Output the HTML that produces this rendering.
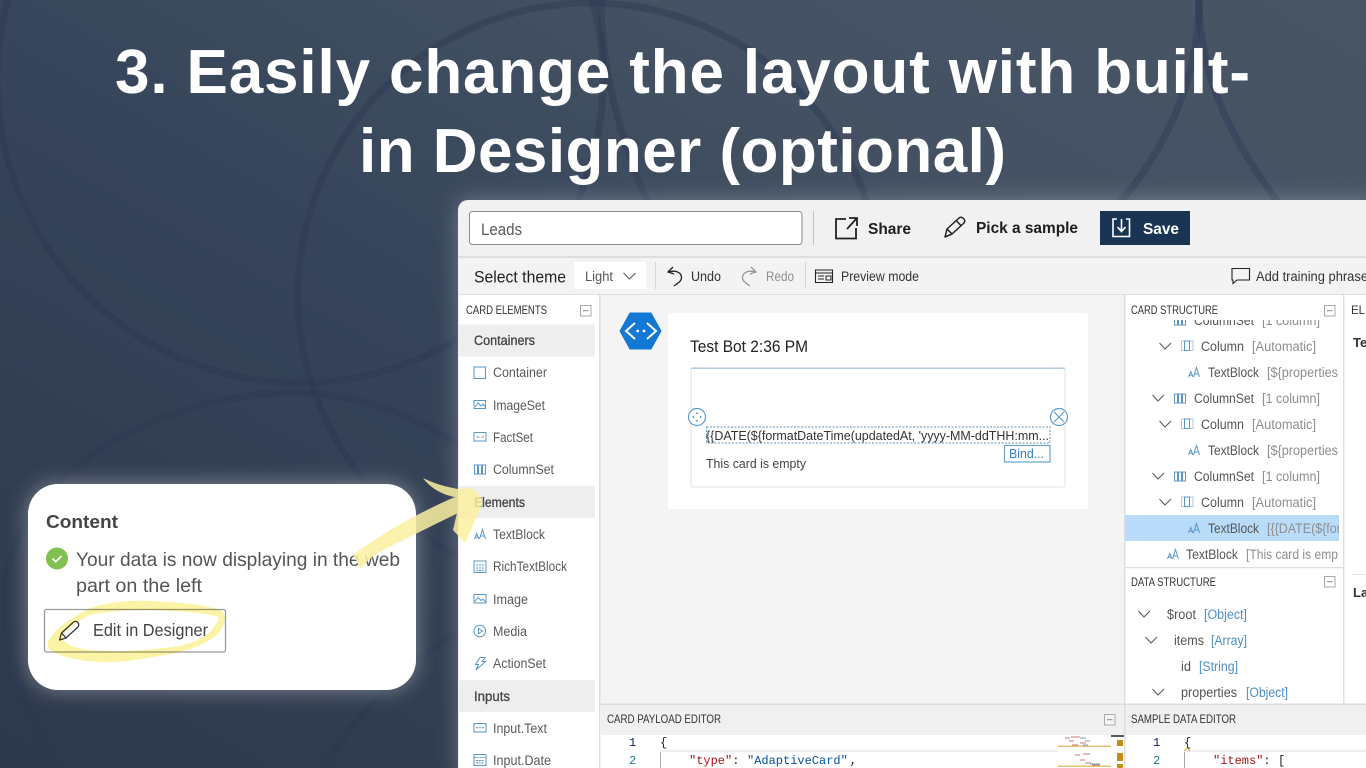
<!DOCTYPE html>
<html lang="en">
<head>
<meta charset="utf-8">
<title>Easily change the layout with built-in Designer</title>
<style>
html,body{margin:0;padding:0;width:1366px;height:768px;overflow:hidden;background:#36445a}
svg{display:block}
text{font-family:"Liberation Sans",sans-serif;white-space:pre}
.t{font-size:62px;font-weight:700;fill:#fff}
.h{font-size:11.500px;fill:#333}
.g{font-size:13.500px;fill:#444;stroke:#444;stroke-width:.3}
.i{font-size:13.500px;fill:#5a5a5a}
.a{font-size:13.500px;fill:#333}
.s{font-size:13.500px;fill:#555}
.m{font-size:13.500px;fill:#8e8e8e}
.b{font-size:13.500px;fill:#4d8fc4}
.c{font-family:"Liberation Mono",monospace;font-size:12px}
.ic{fill:none;stroke:#5a96c8;stroke-width:1}
.ch{fill:none;stroke:#555;stroke-width:1}
</style>
</head>
<body>
<svg width="1366" height="768" viewBox="0 0 1366 768" xmlns="http://www.w3.org/2000/svg">
<defs>
<linearGradient id="bg" x1="0" y1="1" x2="1" y2="0">
<stop offset="0" stop-color="#2d384a"/><stop offset=".45" stop-color="#36445a"/><stop offset=".75" stop-color="#445263"/><stop offset="1" stop-color="#485565"/>
</linearGradient>
<filter id="gl" x="-20%" y="-20%" width="140%" height="140%"><feGaussianBlur stdDeviation="11"/></filter>
<clipPath id="cs"><rect x="1125" y="320" width="214" height="247"/></clipPath>
<clipPath id="ds"><rect x="1125" y="568" width="214" height="136"/></clipPath>
</defs>

<!-- background -->
<rect width="1366" height="768" fill="url(#bg)"/>
<g fill="none" stroke="#2b3750" stroke-opacity=".42" stroke-width="7">
<circle cx="300" cy="80" r="303"/>
<circle cx="590" cy="295" r="292"/>
<path d="M1199,0C1199,80 1165,150 1118,205"/>
<path d="M1199,0C1199,80 1235,145 1280,205"/>
<path d="M601,0C601,100 640,190 675,265"/>
<path d="M296,392C150,395 5,480 5,600C5,660 30,720 57,768"/>
<path d="M296,392C360,394 420,418 460,446"/>
<path d="M462,630C410,660 350,720 323,768"/>
</g>

<!-- title -->
<text class="t" x="115" y="93" textLength="1135" lengthAdjust="spacing">3. Easily change the layout with built-</text>
<text class="t" x="359" y="172" textLength="647" lengthAdjust="spacing">in Designer (optional)</text>

<!-- glows -->
<rect x="458" y="200" width="920" height="580" rx="8" fill="#fff" opacity=".28" filter="url(#gl)"/>
<rect x="28" y="484" width="388" height="206" rx="30" fill="#fff" opacity=".38" filter="url(#gl)"/>

<!-- panel -->
<path d="M458,768V210a10,10 0 0 1 10,-10H1366V768Z" fill="#f1f1f1"/>
<rect x="458" y="256" width="908" height="2" fill="#dedede"/>
<rect x="458" y="293.500" width="908" height="2" fill="#dedede"/>

<!-- top bar -->
<rect x="469.500" y="211.500" width="332.500" height="33" rx="3" fill="#fff" stroke="#8c8c8c"/>
<text x="481" y="235" font-size="16.500" fill="#5a5a5a" textLength="41" lengthAdjust="spacingAndGlyphs">Leads</text>
<rect x="813" y="211" width="1" height="34" fill="#c4c4c4"/>
<path d="M846,219H836V238.500H856V228M847,229L856.500,218.500M849,218H857V226" fill="none" stroke="#222" stroke-width="1.800"/>
<text x="868" y="234" font-size="15.500" font-weight="700" fill="#1e1e1e" textLength="43" lengthAdjust="spacingAndGlyphs">Share</text>
<path d="M945,237L947,229L959,218C960.500,216.800 962,217 963.500,218.500C965,220 965.200,221.500 964,223L952,234ZM956,220.500L961.500,226M947,229L952,234" fill="none" stroke="#222" stroke-width="1.500" stroke-linejoin="round"/>
<text x="976" y="233" font-size="15.500" font-weight="700" fill="#1e1e1e" textLength="102" lengthAdjust="spacingAndGlyphs">Pick a sample</text>
<rect x="1100" y="211" width="90" height="34" fill="#1a3454"/>
<path d="M1117,219H1113V236.500H1129.500V219H1126M1121.500,219V231M1117.500,227L1121.500,231.500L1125.500,227" fill="none" stroke="#fff" stroke-width="1.600"/>
<text x="1143" y="234" font-size="15.500" font-weight="700" fill="#fff" textLength="36" lengthAdjust="spacingAndGlyphs">Save</text>

<!-- toolbar -->
<rect x="459" y="258" width="907" height="36" fill="#f3f3f3"/>
<text x="474" y="282.500" font-size="16.500" fill="#222" textLength="92" lengthAdjust="spacingAndGlyphs">Select theme</text>
<rect x="574" y="262" width="72" height="27" fill="#fff"/>
<text x="585" y="281" font-size="13.500" fill="#555" textLength="28" lengthAdjust="spacingAndGlyphs">Light</text>
<path d="M623.500,273L629.500,279L635.500,273" class="ch"/>
<rect x="655" y="262" width="1" height="27" fill="#d6d6d6"/>
<path d="M673,267L668,272L674,274M668.500,272C675,270 681,272 681.500,277C682,281 678,283 674,286" fill="none" stroke="#222" stroke-width="1.300"/>
<text x="691" y="281" class="a" textLength="30" lengthAdjust="spacingAndGlyphs">Undo</text>
<path d="M751,267L756,272L750,274M755.500,272C749,270 743,272 742.500,277C742,281 746,283 750,286" fill="none" stroke="#999" stroke-width="1.300"/>
<text x="766" y="281" font-size="13.500" fill="#8f8f8f" textLength="28" lengthAdjust="spacingAndGlyphs">Redo</text>
<rect x="805" y="262" width="1" height="27" fill="#d6d6d6"/>
<path d="M815.500,270H832.500V282.500H815.500ZM815.500,273H832.500M818,276H824M818,279H824" fill="none" stroke="#222" stroke-width="1.100"/>
<rect x="826" y="276" width="5" height="4" fill="none" stroke="#222"/>
<text x="841" y="281" class="a" textLength="78" lengthAdjust="spacingAndGlyphs">Preview mode</text>
<path d="M1232,268.500H1249.500V280H1237L1233,283.500V280H1232Z" fill="none" stroke="#222" stroke-width="1.100"/>
<text x="1256" y="281" class="a" textLength="112" lengthAdjust="spacingAndGlyphs">Add training phrase</text>

<!-- left panel -->
<rect x="459" y="295" width="141" height="473" fill="#fff"/>
<rect x="599" y="295" width="1.500" height="473" fill="#dedede"/>
<text x="466" y="314" class="h" textLength="81" lengthAdjust="spacingAndGlyphs">CARD ELEMENTS</text>
<rect x="580.500" y="305.500" width="10.500" height="10.500" fill="#fff" stroke="#aaa"/><path d="M583,310.700H588.500" stroke="#888"/>

<rect x="459" y="324.500" width="136" height="32" fill="#eee"/>
<text x="474" y="345" class="g" textLength="61" lengthAdjust="spacingAndGlyphs">Containers</text>
<rect x="474" y="367" width="11.500" height="11.500" class="ic"/>
<text x="493" y="377" class="i" textLength="54" lengthAdjust="spacingAndGlyphs">Container</text>
<g class="ic"><rect x="474" y="400.500" width="11.500" height="8"/><path d="M475,407L478,403L481,406L483,404L485.500,407"/></g>
<text x="493" y="410" class="i" textLength="52" lengthAdjust="spacingAndGlyphs">ImageSet</text>
<g class="ic"><rect x="474" y="432.500" width="12" height="8.500"/><path d="M476.500,437H479.500M481.500,437H484"/></g>
<text x="493" y="442" class="i" textLength="40" lengthAdjust="spacingAndGlyphs">FactSet</text>
<g class="ic"><rect x="474.500" y="465" width="3" height="9"/><rect x="478.500" y="465" width="3" height="9"/><rect x="482.500" y="465" width="3" height="9"/></g>
<text x="493" y="474" class="i" textLength="61" lengthAdjust="spacingAndGlyphs">ColumnSet</text>

<rect x="459" y="486" width="136" height="32" fill="#eee"/>
<text x="474" y="507" class="g" textLength="51" lengthAdjust="spacingAndGlyphs">Elements</text>
<g class="ic"><path d="M474.500,539L476.800,533.500L479,539M475.300,537.200H478.300M479.500,539L482.500,529.500L485.500,539M480.500,536H484.500"/></g>
<text x="493" y="539" class="i" textLength="52" lengthAdjust="spacingAndGlyphs">TextBlock</text>
<g class="ic"><rect x="474" y="561" width="12" height="11.500"/><path d="M476,565H484M476,568H484M476,570.500H484" stroke-dasharray="2 1"/></g>
<text x="493" y="571" class="i" textLength="74" lengthAdjust="spacingAndGlyphs">RichTextBlock</text>
<g class="ic"><rect x="474" y="594.500" width="12" height="8.500"/><path d="M475,601.500L478,597.500L481,600.500L483,599L485.500,602"/></g>
<text x="493" y="604" class="i" textLength="35" lengthAdjust="spacingAndGlyphs">Image</text>
<g class="ic"><circle cx="479.800" cy="631" r="5.800"/><path d="M478.500,628.500L482.500,631L478.500,633.500Z"/></g>
<text x="493" y="636" class="i" textLength="34" lengthAdjust="spacingAndGlyphs">Media</text>
<path class="ic" d="M480,657.500H485L482,661.500H485.500L476,670L478.500,664.500H475.500Z"/>
<text x="493" y="668" class="i" textLength="53" lengthAdjust="spacingAndGlyphs">ActionSet</text>

<rect x="459" y="680" width="136" height="32" fill="#eee"/>
<text x="474" y="701" class="g" textLength="36" lengthAdjust="spacingAndGlyphs">Inputs</text>
<g class="ic"><rect x="474" y="723.500" width="12" height="8.500"/><path d="M476,727.800H484" stroke-dasharray="2 1"/></g>
<text x="493" y="733" class="i" textLength="54" lengthAdjust="spacingAndGlyphs">Input.Text</text>
<g class="ic"><rect x="474" y="754.500" width="12" height="11"/><path d="M474,757.500H486M476,760.500H484M476,763H484" stroke-dasharray="2 .8"/></g>
<text x="493" y="765" class="i" textLength="58" lengthAdjust="spacingAndGlyphs">Input.Date</text>

<!-- canvas -->
<rect x="600.500" y="295" width="524" height="409" fill="#f4f4f4"/>
<path d="M620,331L630,313H651L661,331L651,349H630Z" fill="#1378d4" stroke="#1378d4" stroke-linejoin="round"/>
<path d="M635,323L626,331L635,339M647,323L656,331L647,339" fill="none" stroke="#fff" stroke-width="2"/>
<circle cx="637.700" cy="331" r="1.400" fill="#fff"/><circle cx="644" cy="331" r="1.400" fill="#fff"/>
<rect x="668" y="313" width="420" height="196" rx="2" fill="#fff"/>
<text x="690" y="352" font-size="16.500" fill="#222" textLength="118" lengthAdjust="spacingAndGlyphs">Test Bot 2:36 PM</text>
<rect x="691" y="368" width="374" height="119" rx="2" fill="#fff" stroke="#ececec" stroke-width="1.500"/>
<rect x="691" y="367.500" width="374" height="1.500" fill="#b5cbdf"/>
<circle cx="697" cy="417" r="8.500" fill="#fff" stroke="#5c9ccb" stroke-width="1.200"/>
<path d="M697,412L695.500,414H698.500ZM697,422L695.500,420H698.500ZM692,417L694,415.500V418.500ZM702,417L700,415.500V418.500Z" fill="#5c9ccb"/>
<rect x="706.500" y="427" width="343.500" height="16" fill="none" stroke="#5c8fb8" stroke-dasharray="2 1.500"/>
<text x="706" y="440" font-size="13" fill="#333" textLength="343" lengthAdjust="spacingAndGlyphs">{{DATE(${formatDateTime(updatedAt, 'yyyy-MM-ddTHH:mm...</text>
<circle cx="1059" cy="417" r="8.500" fill="#fff" stroke="#5c9ccb" stroke-width="1.200"/>
<path d="M1054,412L1064,422M1064,412L1054,422" stroke="#5c9ccb" stroke-width="1.100"/>
<rect x="1004.500" y="445.500" width="45.500" height="16.500" fill="#fff" stroke="#6ba5d0" stroke-width="1.200"/>
<text x="1009" y="458" font-size="13" fill="#2f7fc0" textLength="35" lengthAdjust="spacingAndGlyphs">Bind...</text>
<text x="706" y="468" font-size="13" fill="#444" textLength="100" lengthAdjust="spacingAndGlyphs">This card is empty</text>

<!-- right: structure -->
<rect x="1124.500" y="295" width="219" height="409" fill="#fff"/>
<rect x="1124" y="295" width="1.500" height="409" fill="#dedede"/>
<rect x="1343" y="295" width="1.500" height="409" fill="#dedede"/>
<rect x="1344.500" y="295" width="22" height="409" fill="#fff"/>
<text x="1131" y="314" class="h" textLength="87" lengthAdjust="spacingAndGlyphs">CARD STRUCTURE</text>
<rect x="1324.500" y="305.500" width="10.500" height="10.500" fill="#fff" stroke="#aaa"/><path d="M1327,310.700H1332.500" stroke="#888"/>

<rect x="1125" y="515" width="214" height="26" fill="#b9dcfa"/>
<g clip-path="url(#cs)">
<g class="ic"><rect x="1174.500" y="316" width="3" height="9"/><rect x="1178.500" y="316" width="3" height="9"/><rect x="1182.500" y="316" width="3" height="9"/></g>
<text x="1194" y="325" class="s" textLength="60" lengthAdjust="spacingAndGlyphs">ColumnSet</text>
<text x="1262" y="325" class="m" textLength="58" lengthAdjust="spacingAndGlyphs">[1 column]</text>

<path class="ch" d="M1159.500,343L1165,349L1171,343"/>
<g class="ic"><rect x="1181.500" y="341" width="11.500" height="9.500" stroke-opacity=".5"/><rect x="1184.500" y="341" width="5" height="9.500"/></g>
<text x="1201" y="351" class="s" textLength="43" lengthAdjust="spacingAndGlyphs">Column</text>
<text x="1252" y="351" class="m" textLength="64" lengthAdjust="spacingAndGlyphs">[Automatic]</text>
<path class="ic" d="M1188.500,377L1190.800,371.500L1193,377M1189.300,375.200H1192.300M1193.500,377L1196.500,367.500L1199.500,377M1194.500,374H1198.500"/>
<text x="1208" y="377" class="s" textLength="51" lengthAdjust="spacingAndGlyphs">TextBlock</text>
<text x="1267" y="377" class="m" textLength="71" lengthAdjust="spacingAndGlyphs">[${properties</text>

<path class="ch" d="M1152.500,395L1158,401L1164,395"/>
<g class="ic"><rect x="1174.500" y="394" width="3" height="9"/><rect x="1178.500" y="394" width="3" height="9"/><rect x="1182.500" y="394" width="3" height="9"/></g>
<text x="1194" y="403" class="s" textLength="60" lengthAdjust="spacingAndGlyphs">ColumnSet</text>
<text x="1262" y="403" class="m" textLength="58" lengthAdjust="spacingAndGlyphs">[1 column]</text>

<path class="ch" d="M1159.500,421L1165,427L1171,421"/>
<g class="ic"><rect x="1181.500" y="419" width="11.500" height="9.500" stroke-opacity=".5"/><rect x="1184.500" y="419" width="5" height="9.500"/></g>
<text x="1201" y="429" class="s" textLength="43" lengthAdjust="spacingAndGlyphs">Column</text>
<text x="1252" y="429" class="m" textLength="64" lengthAdjust="spacingAndGlyphs">[Automatic]</text>
<path class="ic" d="M1188.500,455L1190.800,449.500L1193,455M1189.300,453.200H1192.300M1193.500,455L1196.500,445.500L1199.500,455M1194.500,452H1198.500"/>
<text x="1208" y="455" class="s" textLength="51" lengthAdjust="spacingAndGlyphs">TextBlock</text>
<text x="1267" y="455" class="m" textLength="71" lengthAdjust="spacingAndGlyphs">[${properties</text>

<path class="ch" d="M1152.500,473L1158,479L1164,473"/>
<g class="ic"><rect x="1174.500" y="472" width="3" height="9"/><rect x="1178.500" y="472" width="3" height="9"/><rect x="1182.500" y="472" width="3" height="9"/></g>
<text x="1194" y="481" class="s" textLength="60" lengthAdjust="spacingAndGlyphs">ColumnSet</text>
<text x="1262" y="481" class="m" textLength="58" lengthAdjust="spacingAndGlyphs">[1 column]</text>

<path class="ch" d="M1159.500,499L1165,505L1171,499"/>
<g class="ic"><rect x="1181.500" y="497" width="11.500" height="9.500" stroke-opacity=".5"/><rect x="1184.500" y="497" width="5" height="9.500"/></g>
<text x="1201" y="507" class="s" textLength="43" lengthAdjust="spacingAndGlyphs">Column</text>
<text x="1252" y="507" class="m" textLength="64" lengthAdjust="spacingAndGlyphs">[Automatic]</text>
<path class="ic" d="M1188.500,533L1190.800,527.500L1193,533M1189.300,531.200H1192.300M1193.500,533L1196.500,523.500L1199.500,533M1194.500,530H1198.500"/>
<text x="1208" y="533" class="s" textLength="51" lengthAdjust="spacingAndGlyphs">TextBlock</text>
<text x="1267" y="533" class="m" textLength="78" lengthAdjust="spacingAndGlyphs">[{{DATE(${forr</text>

<path class="ic" d="M1167.500,559L1169.800,553.500L1172,559M1168.300,557.200H1171.300M1172.500,559L1175.500,549.500L1178.500,559M1173.500,556H1177.500"/>
<text x="1186" y="559" class="s" textLength="52" lengthAdjust="spacingAndGlyphs">TextBlock</text>
<text x="1246" y="559" class="m" textLength="92" lengthAdjust="spacingAndGlyphs">[This card is emp</text>
</g>

<!-- data structure -->
<rect x="1125" y="567" width="218" height="1.200" fill="#dedede"/>
<text x="1131" y="586" class="h" textLength="85" lengthAdjust="spacingAndGlyphs">DATA STRUCTURE</text>
<rect x="1324.500" y="576.500" width="10.500" height="10.500" fill="#fff" stroke="#aaa"/><path d="M1327,581.700H1332.500" stroke="#888"/>
<g clip-path="url(#ds)">
<path class="ch" d="M1138.500,611L1144,617L1150,611"/>
<text x="1167" y="619" class="s" textLength="29" lengthAdjust="spacingAndGlyphs">$root</text>
<text x="1204" y="619" class="b" textLength="43" lengthAdjust="spacingAndGlyphs">[Object]</text>
<path class="ch" d="M1145.500,637L1151,643L1157,637"/>
<text x="1174" y="645" class="s" textLength="30" lengthAdjust="spacingAndGlyphs">items</text>
<text x="1211" y="645" class="b" textLength="36" lengthAdjust="spacingAndGlyphs">[Array]</text>
<text x="1181" y="671" class="s" textLength="10" lengthAdjust="spacingAndGlyphs">id</text>
<text x="1199" y="671" class="b" textLength="39" lengthAdjust="spacingAndGlyphs">[String]</text>
<path class="ch" d="M1152.500,689L1158,695L1164,689"/>
<text x="1181" y="697" class="s" textLength="56" lengthAdjust="spacingAndGlyphs">properties</text>
<text x="1246" y="697" class="b" textLength="42" lengthAdjust="spacingAndGlyphs">[Object]</text>
</g>

<!-- element properties -->
<text x="1351" y="314" class="h">ELE</text>
<text x="1353" y="347" font-size="13" font-weight="700" fill="#333">Te</text>
<rect x="1352" y="574" width="14" height="1" fill="#e6e6e6"/>
<text x="1353" y="597" font-size="13" font-weight="700" fill="#333">La</text>

<!-- editors -->
<rect x="600" y="704" width="766" height="31" fill="#f0f0f0"/>
<rect x="600" y="703.500" width="766" height="1.500" fill="#dcdcdc"/>
<rect x="1124" y="704" width="1.500" height="64" fill="#dedede"/>
<text x="607" y="723" class="h" textLength="114" lengthAdjust="spacingAndGlyphs">CARD PAYLOAD EDITOR</text>
<rect x="1104.500" y="714.500" width="10.500" height="10.500" fill="#f4f4f4" stroke="#aaa"/><path d="M1107,719.700H1112.500" stroke="#888"/>
<text x="1131" y="723" class="h" textLength="105" lengthAdjust="spacingAndGlyphs">SAMPLE DATA EDITOR</text>

<rect x="600.500" y="735" width="523.500" height="33" fill="#fff"/>
<rect x="1125.500" y="735" width="241" height="33" fill="#fff"/>
<rect x="660" y="750" width="398" height="2" fill="#eeeeee"/>
<rect x="1185" y="750" width="181" height="2" fill="#eeeeee"/>
<text x="629" y="746" class="c" fill="#0b216f">1</text>
<text x="629" y="764" class="c" fill="#237893">2</text>
<text x="660" y="746" class="c" fill="#222">{</text>
<rect x="660" y="752" width="1" height="16" fill="#aaa"/>
<text x="689" y="764" class="c" fill="#a31515">"type"</text>
<text x="732.200" y="764" class="c" fill="#222">:</text>
<text x="747" y="764" class="c" fill="#0451a5">"AdaptiveCard"</text>
<text x="849.800" y="764" class="c" fill="#222">,</text>

<!-- minimap -->
<rect x="1058" y="735" width="53" height="33" fill="#fff"/>
<rect x="1058" y="745.500" width="53" height="1.500" fill="#e2c27a"/>
<rect x="1058" y="765.500" width="53" height="1.500" fill="#e2c27a"/>
<path d="M1065,738H1070M1071,737H1080M1069,741H1074M1072,745H1078M1080,743H1086M1075,755H1080M1083,754H1090M1080,760H1085M1085,763H1091M1092,765H1100" stroke="#c77" stroke-width="1"/>
<path d="M1080,738H1086M1085,741H1090M1090,764H1100M1083,745H1088" stroke="#7a9fc7" stroke-width="1"/>
<rect x="1111" y="735" width="13" height="33" fill="#fff"/>
<rect x="1111" y="735" width="13" height="2" fill="#5a5a5a"/>
<rect x="1117" y="740" width="6" height="6" fill="#c18f16"/>
<rect x="1117" y="753" width="6" height="8" fill="#c18f16"/>
<rect x="1117" y="764" width="6" height="4" fill="#c18f16"/>

<text x="1153" y="746" class="c" fill="#0b216f">1</text>
<text x="1153" y="764" class="c" fill="#237893">2</text>
<text x="1184" y="746" class="c" fill="#222">{</text>
<path d="M1184,751L1187,748L1190,751" fill="none" stroke="#d9a93a"/>
<rect x="1184" y="752" width="1" height="16" fill="#aaa"/>
<text x="1213" y="764" class="c" fill="#a31515">"items"</text>
<text x="1263.400" y="764" class="c" fill="#222">:</text>
<text x="1278" y="764" class="c" fill="#222">[</text>

<!-- content card -->
<rect x="28" y="484" width="388" height="206" rx="30" fill="#fff"/>
<text x="46" y="528" font-size="18.500" font-weight="700" fill="#444" textLength="72" lengthAdjust="spacingAndGlyphs">Content</text>
<circle cx="57" cy="558.500" r="11" fill="#80c050"/>
<path d="M52.500,558.500L55.800,561.800L61.500,556" fill="none" stroke="#fff" stroke-width="1.700"/>
<text x="76" y="566" font-size="19.500" fill="#555" textLength="324" lengthAdjust="spacingAndGlyphs">Your data is now displaying in the web</text>
<text x="76" y="592" font-size="19.500" fill="#555" textLength="126" lengthAdjust="spacingAndGlyphs">part on the left</text>
<rect x="44.500" y="609.500" width="181" height="42.500" rx="2" fill="none" stroke="#9a9a9a" stroke-width="1.300"/>
<path d="M59.500,640L61.500,633L73,622.500C74.500,621 76.500,621 78,622.500C79,624 79,625.500 78,627L66,638ZM61.500,633L66,638" fill="none" stroke="#333" stroke-width="1.200" stroke-linejoin="round"/>
<text x="93" y="636" font-size="17.500" fill="#444" textLength="115" lengthAdjust="spacingAndGlyphs">Edit in Designer</text>

<!-- yellow scribbles -->
<path style="mix-blend-mode:multiply" fill="#fbf3a5" fill-rule="evenodd" d="M90,608C110,602 130,600 150,601C180,602 205,605 220,610C226,613 226,620 222,628C214,642 190,652 153,657C130,661 115,663 100,662C80,661 60,657 50,650C45,645 48,638 60,627C68,620 78,615 90,608ZM90,615C75,622 62,632 63,638C65,645 75,648 90,650C120,653 150,650 180,646C195,642 205,637 210,632C214,627 218,622 219,617C205,613 190,612 170,611C145,609 115,610 90,615Z"/>
<g fill="#fbf0a0" opacity=".85">
<path d="M353,555C375,538 415,514 455,497L458,513L387,548C372,556 366,562 361,569Z"/>
<path d="M423,478C435,484 447,487 458,489L470,488C478,491 483,498 482,505L465,543L453,530L457,513L455,497C443,495 430,488 423,478Z"/>
</g>
</svg>
</body>
</html>
